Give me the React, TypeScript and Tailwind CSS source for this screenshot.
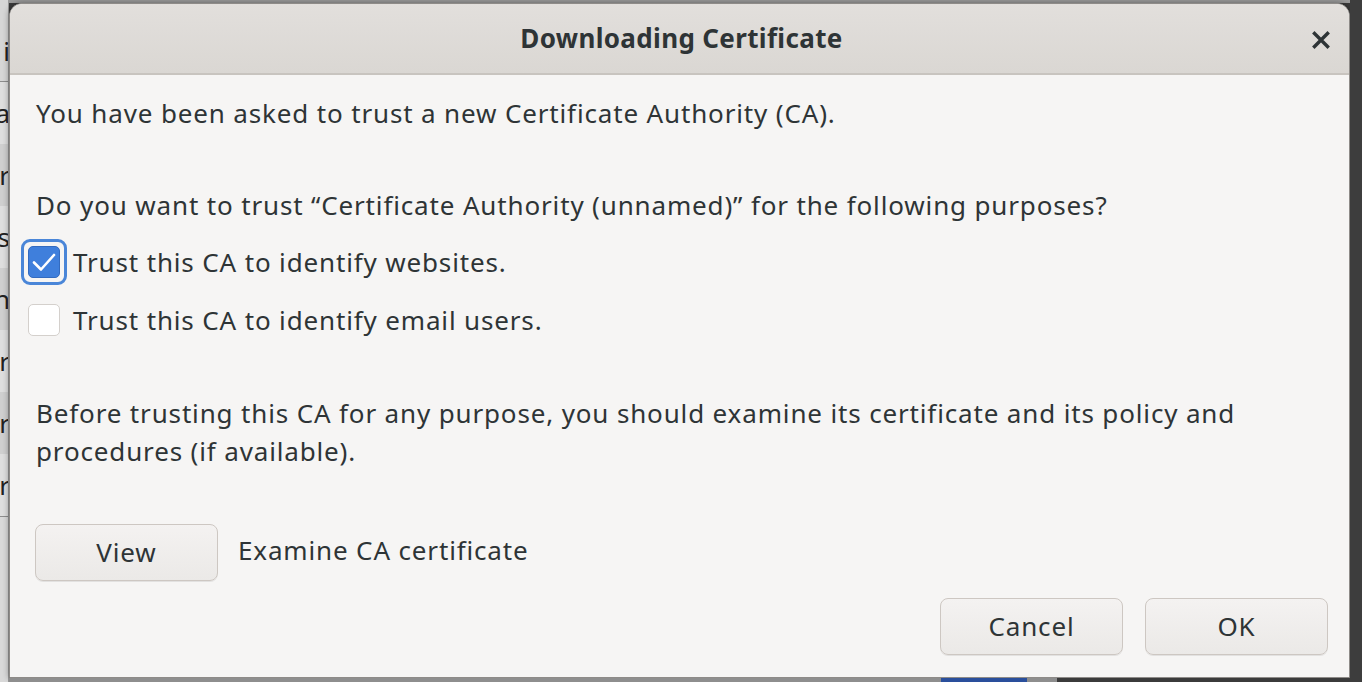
import { useState } from "react";

const font = { fontFamily: '"Noto Sans", "Open Sans", sans-serif' };

function CheckRow({ label, checked, focused, onToggle }: { label: string; checked: boolean; focused?: boolean; onToggle: () => void }) {
  return (
    <div className="flex items-center h-[58px] cursor-pointer" onClick={onToggle}>
      <div className={"flex items-center justify-center w-[46px] h-[46px] rounded-[9px] " + (focused ? "border-[3px] border-[#4a86d8]" : "border-[3px] border-transparent")}>
        {checked ? (
          <div className="flex items-center justify-center w-[32px] h-[32px] rounded-[5px] bg-[#3f7fdc] border border-[#336bc0]">
            <svg width="26" height="22" viewBox="0 0 26 22">
              <path d="M3 11.5 L10 18.5 L23 4" fill="none" stroke="#fff" strokeWidth="2.6" strokeLinecap="round" strokeLinejoin="round" />
            </svg>
          </div>
        ) : (
          <div className="w-[32px] h-[32px] rounded-[5px] bg-white border border-[#d4d0cc]" />
        )}
      </div>
      <span className="ml-[6px] text-[26px] tracking-[0.85px] text-[#2e3436]">{label}</span>
    </div>
  );
}

function Button({ text, className }: { text: string; className?: string }) {
  return (
    <button className={"h-[57px] w-[183px] rounded-[8px] border border-[#cdc7c2] bg-gradient-to-b from-[#f4f2f1] to-[#ebe9e7] shadow-[0_1px_0_rgba(0,0,0,0.08)] text-[26px] tracking-[0.85px] text-[#2e3436] " + (className ?? "")}>
      {text}
    </button>
  );
}

const sideLetters = ["i", "a", "r", "rs", "n", "r", "r", "r"];

export default function App() {
  const [web, setWeb] = useState(true);
  const [mail, setMail] = useState(false);

  return (
    <div className="flex w-[1362px] h-[682px] overflow-hidden bg-[#3b3b3b]" style={font}>
      <div className="flex flex-col w-[9px] bg-[#d6d6d6] overflow-hidden text-[26px] text-[#222] border-r border-[#9a9a9a]">
        <div className="h-[3px] bg-[#9e9e9e]" />
        <div className="flex flex-col pt-[20px]">
          {sideLetters.map((l, i) => (
            <div key={i} className={"h-[62px] flex items-center justify-end leading-none " + (i === 0 ? "border-b border-[#8d8d8d]" : i % 2 ? "bg-[#dedede]" : "bg-[#cfcfcf]")}>
              <span className="-mr-[2px]">{l}</span>
            </div>
          ))}
          <div className="h-[1px] bg-[#8d8d8d]" />
          <div className="h-[200px] bg-[#d9d9d9]" />
        </div>
      </div>

      <div className="flex flex-col w-[1341px]">
        <div className="h-[3px] bg-[#9b9b9b]" />
        <div className="flex flex-col h-[675px] rounded-t-[13px] border border-[#8e8b88] bg-[#f6f5f4] overflow-hidden shadow-[0_0_6px_rgba(0,0,0,0.4)]">
          <div className="relative flex items-center justify-center h-[71px] shrink-0 bg-gradient-to-b from-[#e2dfdc] to-[#dad7d3] border-b-[2px] border-[#c8c4bf]">
            <span className="text-[26px] font-bold tracking-[0.35px] text-[#2e3436] ml-[4px]">Downloading Certificate</span>
            <button className="absolute right-[13px] top-[21px] w-[30px] h-[30px] flex items-center justify-center">
              <svg width="18" height="18" viewBox="0 0 18 18">
                <path d="M2.5 2.5 L15.5 15.5 M15.5 2.5 L2.5 15.5" stroke="#2e3436" strokeWidth="3.4" strokeLinecap="square" />
              </svg>
            </button>
          </div>

          <div className="flex flex-col flex-1 pl-[26px] pr-[21px] text-[26px] tracking-[0.85px] text-[#2e3436]">
            <p className="mt-[19px] leading-[38px]">You have been asked to trust a new Certificate Authority (CA).</p>
            <p className="mt-[54px] leading-[38px]">Do you want to trust “Certificate Authority (unnamed)” for the following purposes?</p>
            <div className="-ml-[15px] mt-[9px] flex flex-col">
              <CheckRow label="Trust this CA to identify websites." checked={web} focused onToggle={() => setWeb(!web)} />
              <CheckRow label="Trust this CA to identify email users." checked={mail} onToggle={() => setMail(!mail)} />
            </div>
            <p className="mt-[45px] leading-[38px]">
              Before trusting this CA for any purpose, you should examine its certificate and its policy and procedures (if available).
            </p>
            <div className="mt-[54px] flex items-center -ml-[1px]">
              <Button text="View" />
              <span className="ml-[20px] -mt-[5px]">Examine CA certificate</span>
            </div>
            <div className="mt-[17px] flex justify-end gap-[22px]">
              <Button text="Cancel" />
              <Button text="OK" />
            </div>
          </div>
        </div>
        <div className="flex h-[4px] shrink-0">
          <div className="w-[932px] bg-[#8e8e8e]" />
          <div className="w-[86px] bg-[#2a4f9c]" />
          <div className="w-[30px] bg-[#8e8e8e]" />
          <div className="flex-1 bg-[#3b3b3b]" />
        </div>
      </div>

      <div className="flex-1 bg-[#3d3d3d]" />
    </div>
  );
}
